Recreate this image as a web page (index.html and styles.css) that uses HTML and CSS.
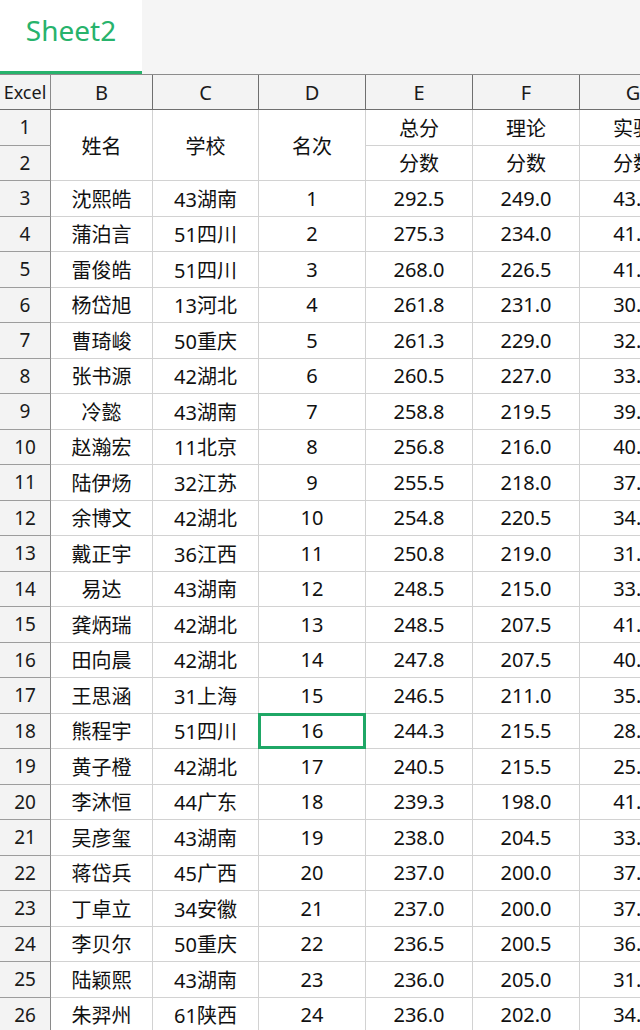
FILE: index.html
```html
<!DOCTYPE html>
<html lang="zh">
<head>
<meta charset="utf-8">
<title>Sheet2</title>
<link rel="stylesheet" href="styles.css">
</head>
<body>
<div class="app">
  <div class="tabbar">
    <div class="tab">Sheet2</div>
  </div>
  <div class="sheet">
    <div class="ch corner">Excel</div>
    <div class="ch">B</div>
    <div class="ch">C</div>
    <div class="ch">D</div>
    <div class="ch">E</div>
    <div class="ch">F</div>
    <div class="ch">G</div>

    <div class="rh">1</div>
    <div class="c span2">姓名</div>
    <div class="c span2">学校</div>
    <div class="c span2">名次</div>
    <div class="c">总分</div>
    <div class="c">理论</div>
    <div class="c">实验</div>
    <div class="rh">2</div>
    <div class="c">分数</div>
    <div class="c">分数</div>
    <div class="c">分数</div>

    <div class="rh">3</div><div class="c">沈熙皓</div><div class="c">43湖南</div><div class="c">1</div><div class="c">292.5</div><div class="c">249.0</div><div class="c">43.5</div>
    <div class="rh">4</div><div class="c">蒲泊言</div><div class="c">51四川</div><div class="c">2</div><div class="c">275.3</div><div class="c">234.0</div><div class="c">41.3</div>
    <div class="rh">5</div><div class="c">雷俊皓</div><div class="c">51四川</div><div class="c">3</div><div class="c">268.0</div><div class="c">226.5</div><div class="c">41.5</div>
    <div class="rh">6</div><div class="c">杨岱旭</div><div class="c">13河北</div><div class="c">4</div><div class="c">261.8</div><div class="c">231.0</div><div class="c">30.8</div>
    <div class="rh">7</div><div class="c">曹琦峻</div><div class="c">50重庆</div><div class="c">5</div><div class="c">261.3</div><div class="c">229.0</div><div class="c">32.3</div>
    <div class="rh">8</div><div class="c">张书源</div><div class="c">42湖北</div><div class="c">6</div><div class="c">260.5</div><div class="c">227.0</div><div class="c">33.5</div>
    <div class="rh">9</div><div class="c">冷懿</div><div class="c">43湖南</div><div class="c">7</div><div class="c">258.8</div><div class="c">219.5</div><div class="c">39.3</div>
    <div class="rh">10</div><div class="c">赵瀚宏</div><div class="c">11北京</div><div class="c">8</div><div class="c">256.8</div><div class="c">216.0</div><div class="c">40.8</div>
    <div class="rh">11</div><div class="c">陆伊炀</div><div class="c">32江苏</div><div class="c">9</div><div class="c">255.5</div><div class="c">218.0</div><div class="c">37.5</div>
    <div class="rh">12</div><div class="c">余博文</div><div class="c">42湖北</div><div class="c">10</div><div class="c">254.8</div><div class="c">220.5</div><div class="c">34.3</div>
    <div class="rh">13</div><div class="c">戴正宇</div><div class="c">36江西</div><div class="c">11</div><div class="c">250.8</div><div class="c">219.0</div><div class="c">31.8</div>
    <div class="rh">14</div><div class="c">易达</div><div class="c">43湖南</div><div class="c">12</div><div class="c">248.5</div><div class="c">215.0</div><div class="c">33.5</div>
    <div class="rh">15</div><div class="c">龚炳瑞</div><div class="c">42湖北</div><div class="c">13</div><div class="c">248.5</div><div class="c">207.5</div><div class="c">41.0</div>
    <div class="rh">16</div><div class="c">田向晨</div><div class="c">42湖北</div><div class="c">14</div><div class="c">247.8</div><div class="c">207.5</div><div class="c">40.3</div>
    <div class="rh">17</div><div class="c">王思涵</div><div class="c">31上海</div><div class="c">15</div><div class="c">246.5</div><div class="c">211.0</div><div class="c">35.5</div>
    <div class="rh">18</div><div class="c">熊程宇</div><div class="c">51四川</div><div class="c selected">16</div><div class="c">244.3</div><div class="c">215.5</div><div class="c">28.8</div>
    <div class="rh">19</div><div class="c">黄子橙</div><div class="c">42湖北</div><div class="c">17</div><div class="c">240.5</div><div class="c">215.5</div><div class="c">25.0</div>
    <div class="rh">20</div><div class="c">李沐恒</div><div class="c">44广东</div><div class="c">18</div><div class="c">239.3</div><div class="c">198.0</div><div class="c">41.3</div>
    <div class="rh">21</div><div class="c">吴彦玺</div><div class="c">43湖南</div><div class="c">19</div><div class="c">238.0</div><div class="c">204.5</div><div class="c">33.5</div>
    <div class="rh">22</div><div class="c">蒋岱兵</div><div class="c">45广西</div><div class="c">20</div><div class="c">237.0</div><div class="c">200.0</div><div class="c">37.0</div>
    <div class="rh">23</div><div class="c">丁卓立</div><div class="c">34安徽</div><div class="c">21</div><div class="c">237.0</div><div class="c">200.0</div><div class="c">37.0</div>
    <div class="rh">24</div><div class="c">李贝尔</div><div class="c">50重庆</div><div class="c">22</div><div class="c">236.5</div><div class="c">200.5</div><div class="c">36.0</div>
    <div class="rh">25</div><div class="c">陆颖熙</div><div class="c">43湖南</div><div class="c">23</div><div class="c">236.0</div><div class="c">205.0</div><div class="c">31.0</div>
    <div class="rh">26</div><div class="c">朱羿州</div><div class="c">61陕西</div><div class="c">24</div><div class="c">236.0</div><div class="c">202.0</div><div class="c">34.0</div>
  </div>
</div>
</body>
</html>
```

FILE: styles.css
```css
* { box-sizing: border-box; }
html, body {
  margin: 0;
  padding: 0;
  background: #ffffff;
}
body {
  width: 640px;
  height: 1030px;
  overflow: hidden;
  font-family: "Noto Sans", "Noto Sans CJK SC", sans-serif;
  color: #111111;
}
.app {
  width: 640px;
  overflow: hidden;
}
.tabbar {
  height: 74px;
  background: #f5f5f5;
  display: flex;
  align-items: stretch;
}
.tab {
  width: 142px;
  background: #ffffff;
  border-bottom: 3px solid #27b36c;
  color: #27b36c;
  font-size: 28px;
  display: flex;
  align-items: center;
  justify-content: center;
  padding-bottom: 11px;
}
.sheet {
  display: grid;
  grid-template-columns: 51px 102px 106px 107px 107px 107px 107px;
  grid-template-rows: 35px repeat(26, 35.5px);
  width: 687px;
  border-top: 1px solid #8c8c8c;
}
.ch {
  background: #f3f3f3;
  border-right: 1px solid #6f6f6f;
  border-bottom: 1px solid #6f6f6f;
  display: flex;
  align-items: center;
  justify-content: center;
  font-size: 20px;
  color: #1a1a1a;
}
.ch.corner {
  font-size: 18px;
  border-right-color: #8a8a8a;
}
.rh {
  background: #f3f3f3;
  border-right: 1px solid #8a8a8a;
  border-bottom: 1px solid #9c9c9c;
  display: flex;
  align-items: center;
  justify-content: center;
  font-size: 19px;
  color: #1a1a1a;
}
.c {
  border-right: 1px solid #d2d2d2;
  border-bottom: 1px solid #d2d2d2;
  display: flex;
  align-items: center;
  justify-content: center;
  font-size: 20px;
  white-space: nowrap;
  overflow: hidden;
}
.span2 {
  grid-row: span 2;
}
.selected {
  position: relative;
  overflow: visible;
}
.selected::after {
  content: "";
  position: absolute;
  left: -1px;
  top: -1px;
  right: -1px;
  bottom: -1px;
  border: 3px solid #1fa766;
}
```
